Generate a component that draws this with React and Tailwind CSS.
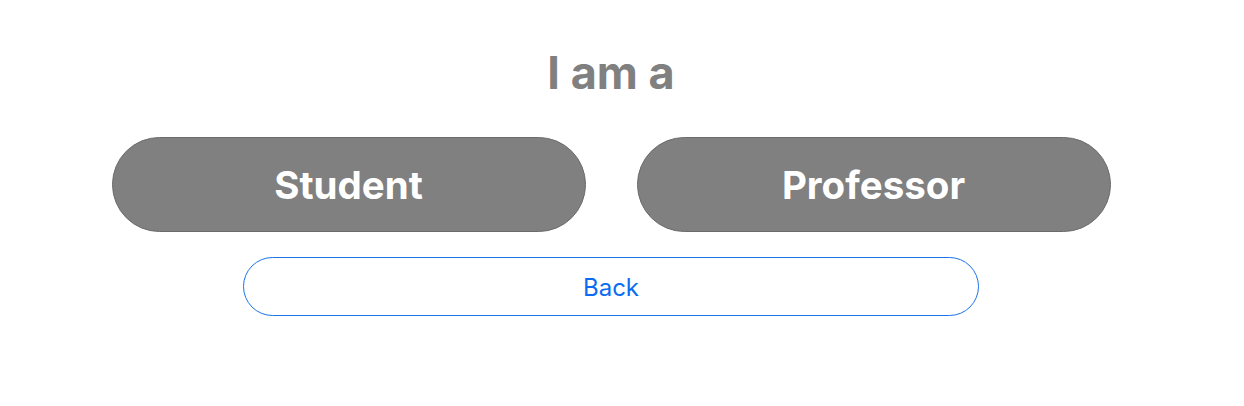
export default function App() {
  return (
    <div className="flex min-h-[406px] w-full flex-col items-center bg-white pt-[44px] pr-[22px] font-['Inter',sans-serif]">
      <h1 className="text-[45px] leading-[58px] font-bold text-[#808080]">I am a</h1>
      <div className="mt-[35px] flex gap-[51px]">
        <button className="h-[95px] w-[474px] rounded-full border border-[#6b6b6b] bg-[#808080] pt-[2px] text-[38.5px] font-bold text-white">
          Student
        </button>
        <button className="h-[95px] w-[474px] rounded-full border border-[#6b6b6b] bg-[#808080] pt-[2px] text-[38.5px] font-bold text-white">
          Professor
        </button>
      </div>
      <button className="mt-[25px] h-[59px] w-[736px] rounded-full border border-[#1a73e8] bg-white pt-[2px] text-[24px] text-[#0a6cf0]">
        Back
      </button>
    </div>
  );
}
